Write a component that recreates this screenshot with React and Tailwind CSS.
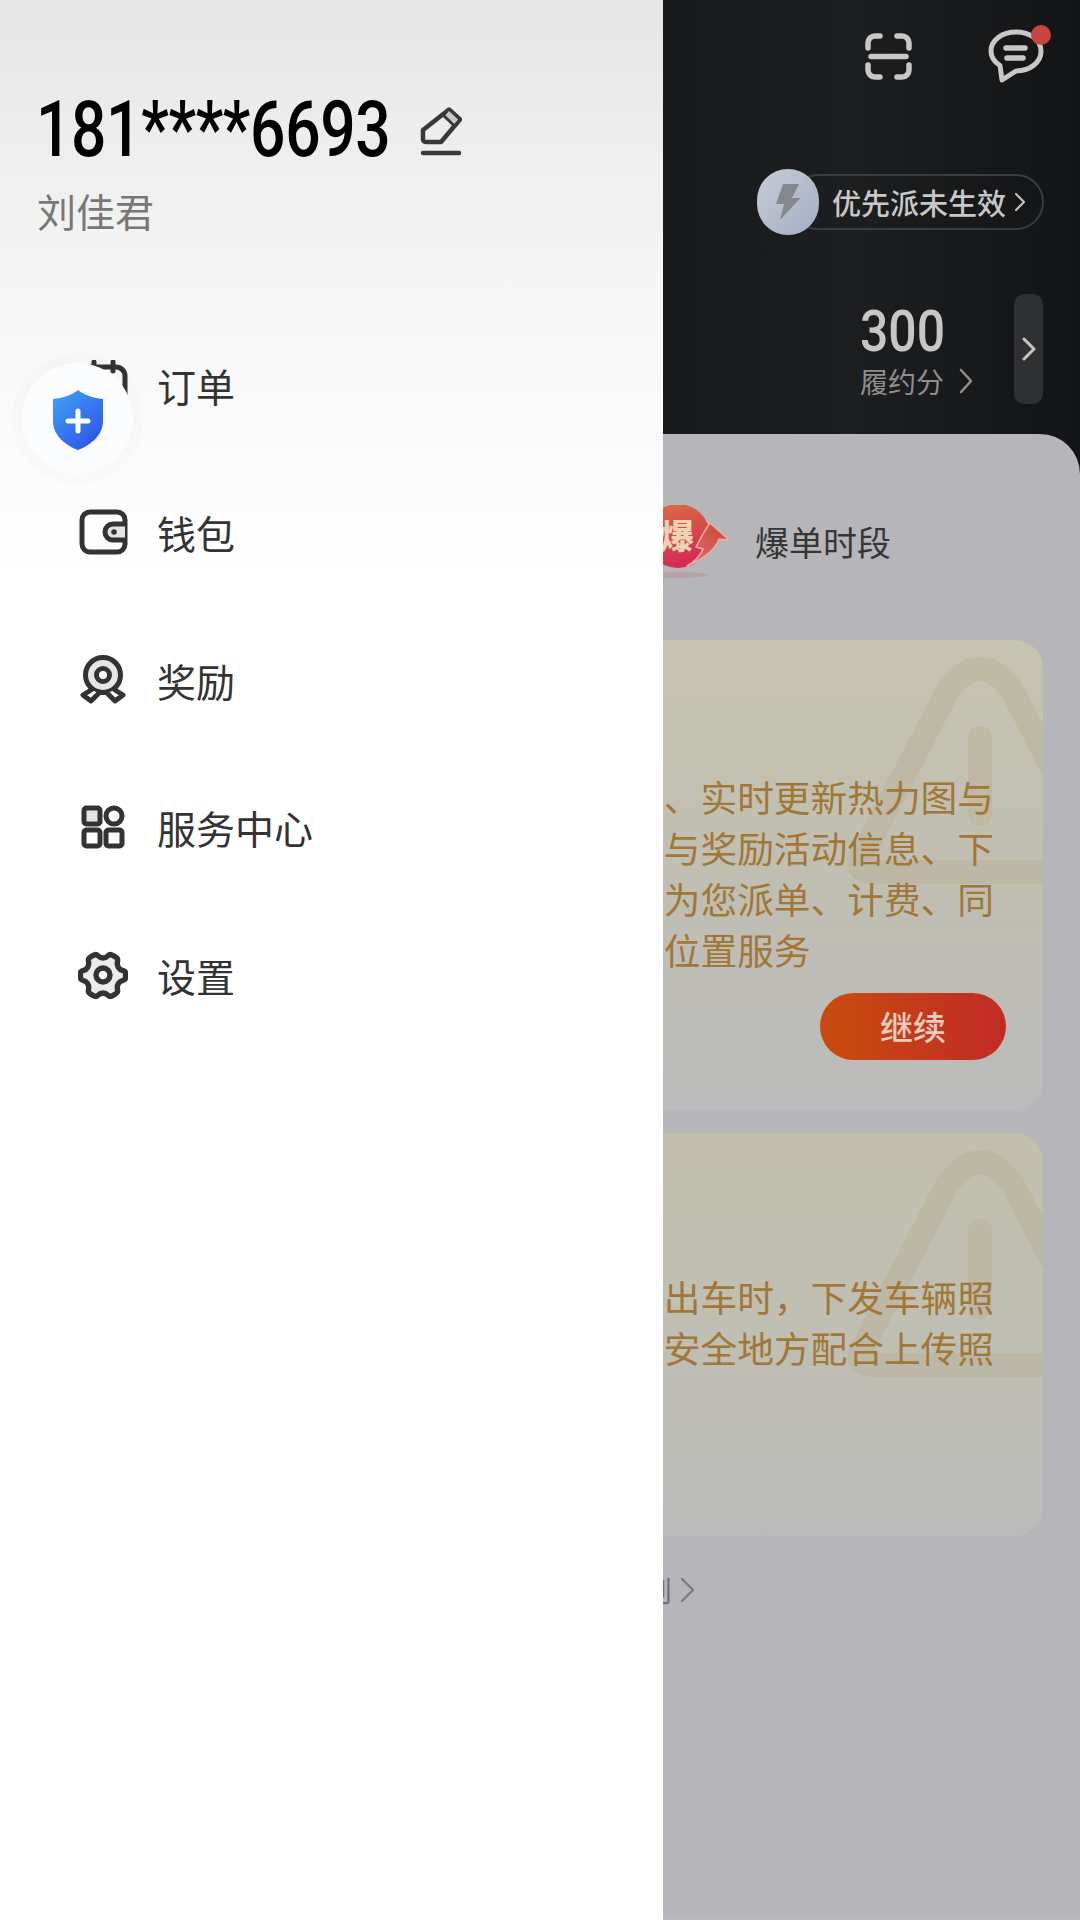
const CJK = "font-['Noto_Sans_CJK_SC','Noto_Sans',sans-serif]";

function OrderIcon() {
  return (
    <svg width="50" height="50" viewBox="0 0 50 50" fill="none" stroke="#333" strokeWidth="5" strokeLinecap="round" strokeLinejoin="round">
      <rect x="3" y="7" width="44" height="40" rx="9" />
      <path d="M16 2v9M35 2v9" />
    </svg>
  );
}
function WalletIcon() {
  return (
    <svg width="50" height="50" viewBox="0 0 50 50" fill="none" stroke="#333" strokeWidth="5" strokeLinejoin="round">
      <rect x="4" y="5" width="43" height="40" rx="8" />
      <path d="M47 17H35a8 8 0 0 0 0 16h12" fill="#e4e4e4" />
      <circle cx="36" cy="25" r="2.800" fill="#333" stroke="none" />
    </svg>
  );
}
function AwardIcon() {
  return (
    <svg width="50" height="50" viewBox="0 0 50 50" fill="none" stroke="#333" strokeWidth="5" strokeLinejoin="round" strokeLinecap="round">
      <circle cx="25" cy="20" r="17.500" fill="#e6e6e6" />
      <circle cx="25" cy="20" r="6.500" fill="#fff" />
      <path d="M13 35l-8 5 8 6 8-8M37 35l8 5-8 6-8-8" fill="#fff" />
    </svg>
  );
}
function GridIcon() {
  return (
    <svg width="50" height="50" viewBox="0 0 50 50" fill="none" stroke="#333" strokeWidth="5" strokeLinejoin="round">
      <rect x="6" y="6" width="16" height="16" rx="2.500" fill="#e4e4e4" />
      <circle cx="36" cy="14" r="8" />
      <rect x="6" y="28" width="16" height="16" rx="2.500" />
      <rect x="28" y="28" width="16" height="16" rx="2.500" />
    </svg>
  );
}
function GearIcon() {
  return (
    <svg width="50" height="50" viewBox="0 0 50 50" fill="none" stroke="#333" strokeWidth="5.400" strokeLinejoin="round">
      <path d="M18 4.500c1.800 0 2.400 3.500 7 3.500s5.200-3.500 7-3.500c1.500 0 6.800 3 7.500 4.500.8 1.800-1.500 4.300.8 8.300s5.500 2.800 6.700 4.300c.8 1.200.8 6.600 0 7.800-1.200 1.500-4.400.3-6.700 4.300s0 6.500-.8 8.300c-.7 1.500-6 4.500-7.500 4.500-1.800 0-2.400-3.500-7-3.500s-5.200 3.500-7 3.500c-1.500 0-6.800-3-7.500-4.500-.8-1.800 1.500-4.300-.8-8.300s-5.500-2.800-6.700-4.300c-.8-1.200-.8-6.600 0-7.800 1.200-1.500 4.400-.3 6.700-4.300s0-6.500.8-8.300C11.200 7.500 16.500 4.500 18 4.500z" fill="#ececec" />
      <circle cx="25" cy="25" r="7" fill="#fff" />
    </svg>
  );
}

const MENU = [
  ["订单", OrderIcon],
  ["钱包", WalletIcon],
  ["奖励", AwardIcon],
  ["服务中心", GridIcon],
  ["设置", GearIcon],
];

function Watermark() {
  return (
    <svg className="absolute left-0 top-0" width="380" height="300" viewBox="0 0 380 300" fill="none">
      <path d="M212 232Q188 232 201 212L284 52Q317 6 350 52L433 212Q446 232 422 232Z" stroke="#b5a98c" strokeOpacity="0.34" strokeWidth="24" strokeLinejoin="round" />
      <rect x="305" y="86" width="24" height="100" rx="12" fill="#b5a98c" fillOpacity="0.34" />
    </svg>
  );
}

export default function App() {
  return (
    <div className={`relative flex h-[1920px] w-[1080px] overflow-hidden bg-[#b5b5ba] ${CJK}`}>
      {/* drawer */}
      <aside className="flex h-full w-[663px] shrink-0 flex-col bg-[linear-gradient(180deg,#e6e6e6_0px,#f6f6f6_300px,#ffffff_580px)]">
        <div className="flex h-[260px] flex-col pl-[37px] pt-[88px]">
          <div className="flex h-[84px] items-center">
            <span className="-ml-px w-[352px] origin-left scale-x-[0.81] whitespace-nowrap font-['Roboto',sans-serif] text-[77px] font-medium leading-none tracking-[-0.5px] text-black">
              181****6693
            </span>
            <svg className="ml-[32px] mt-[2px]" width="42" height="50" viewBox="0 0 42 50" fill="none" stroke="#383838" strokeWidth="4.500" strokeLinejoin="round" strokeLinecap="round">
              <path d="M29 3.500 40 13.500 21 36H5.500a2.500 2.500 0 0 1-2.500-2.500V24z" />
              <path d="M29 5 38 13.500 33.500 19 24.500 10.500z" fill="#c9c9c9" stroke="none" />
              <path d="M23.500 9.500 34 19.500" strokeWidth="3" />
              <path d="M3 47H39" />
            </svg>
          </div>
          <div className="mt-[12px] text-[39px] leading-[52px] text-[#777777]">刘佳君</div>
        </div>
        <nav className="mt-[51px] flex flex-col">
          {MENU.map(([label, Icon]) => (
            <div key={label} className="flex h-[147.500px] items-center pl-[78px]">
              <Icon />
              <span className="ml-[29px] text-[39px] text-[#333333]">{label}</span>
            </div>
          ))}
        </nav>
      </aside>

      {/* floating shield button */}
      <div className="absolute left-[12px] top-[353px] flex h-[131px] w-[131px] items-center justify-center rounded-full bg-black/[0.012]">
        <div className="flex h-[111px] w-[111px] items-center justify-center rounded-full bg-[#fbfcfd]">
          <svg width="50" height="60" viewBox="0 0 50 60" className="mt-[3px]">
            <defs>
              <linearGradient id="sh" x1="0.1" y1="0" x2="0.9" y2="1">
                <stop offset="0" stopColor="#40a0f6" />
                <stop offset="1" stopColor="#2d4fe8" />
              </linearGradient>
            </defs>
            <path d="M25 0C31 5 40 8 50 9V31C50 45 38 55 25 60C12 55 0 45 0 31V9C10 8 19 5 25 0Z" fill="url(#sh)" />
            <path d="M25 21V41M15 31H35" stroke="#fff" strokeWidth="5" strokeLinecap="round" />
          </svg>
        </div>
      </div>

      {/* page behind the drawer */}
      <main className="flex h-full min-w-0 flex-1 flex-col overflow-hidden bg-[linear-gradient(90deg,#17191b_0%,#1c1e20_45%,#121416_100%)]">
        <header className="flex h-[434px] shrink-0 flex-col pr-[37px] pt-[30px]">
          <div className="flex h-[52px] justify-end gap-[77px]">
            <svg className="mt-[3px]" width="47" height="47" viewBox="0 0 47 47" fill="none" stroke="#c8c8c8" strokeWidth="5.500" strokeLinecap="round">
              <path d="M15 3H10a7 7 0 0 0-7 7v5M32 3h5a7 7 0 0 1 7 7v5M15 44H10a7 7 0 0 1-7-7v-5M32 44h5a7 7 0 0 0 7-7v-5M6 23.500H41" />
            </svg>
            <svg className="overflow-visible" width="54" height="52" viewBox="0 0 54 52" fill="none" stroke="#c8c8c8" strokeWidth="5" strokeLinecap="round" strokeLinejoin="round">
              <path d="M27 2C13 2 2 10 2 21c0 6 3.500 11 9 14.500L13 50l14-9c14 0 25-8.500 25-20S41 2 27 2Z" />
              <path d="M17 18H36M18 28H34" strokeWidth="5.500" />
              <circle cx="52" cy="5" r="10" fill="#c9453f" stroke="none" />
            </svg>
          </div>
          <div className="mt-[87px] flex h-[66px] items-center justify-end">
            <div className="relative -mr-px flex h-[56px] w-[254px] items-center rounded-full border-2 border-[#3b3d3f] pl-[40px]">
              <div className="absolute left-[-35px] top-[-7px] flex h-[66px] w-[62px] items-center justify-center rounded-full bg-[linear-gradient(135deg,#c8ccd5,#a2adc4)]">
                <svg width="26" height="38" viewBox="0 0 26 38">
                  <path d="M8 1H24L17 15H25.500L5 37 9 21H1Z" fill="#84878e" />
                </svg>
              </div>
              <span className="whitespace-nowrap text-[29px] font-medium leading-none text-[#c8c8c8]">优先派未生效</span>
              <svg className="ml-[9px]" width="10" height="20" viewBox="0 0 10 20" fill="none" stroke="#c0c0c0" strokeWidth="2.200" strokeLinecap="round" strokeLinejoin="round">
                <path d="M1 2l8 8-8 8" />
              </svg>
            </div>
          </div>
          <div className="mt-[59px] flex h-[110px] justify-end gap-[41px]">
            <div className="flex w-[113px] flex-col">
              <span className="mt-[14px] h-[46px] w-[82px] origin-left scale-x-[0.86] whitespace-nowrap font-['Roboto',sans-serif] text-[58px] font-medium leading-[46px] text-[#c6c6c6]">300</span>
              <div className="mt-[9px] flex items-center justify-between">
                <span className="text-[28px] leading-[36px] text-[#8e8e8e]">履约分</span>
                <svg width="14" height="26" viewBox="0 0 14 26" fill="none" stroke="#8e8e8e" strokeWidth="2.600" strokeLinecap="round" strokeLinejoin="round">
                  <path d="M2 2l10 11L2 24" />
                </svg>
              </div>
            </div>
            <div className="flex w-[29px] items-center justify-center rounded-[10px] bg-[#2e3032]">
              <svg width="14" height="24" viewBox="0 0 14 24" fill="none" stroke="#c4c4c4" strokeWidth="3" strokeLinecap="round" strokeLinejoin="round">
                <path d="M2 2l10 10L2 22" />
              </svg>
            </div>
          </div>
        </header>

        <section className="flex min-h-0 flex-1 flex-col rounded-tr-[40px] bg-[#b5b5ba] pr-[37px]">
          <div className="flex h-[206px] shrink-0 items-center pt-[10px]">
            <svg width="67" height="74" viewBox="0 0 67 74" className="shrink-0">
              <defs>
                <linearGradient id="boom" x1="0" y1="0" x2="0.3" y2="1">
                  <stop offset="0" stopColor="#d9703f" />
                  <stop offset="1" stopColor="#d42c55" />
                </linearGradient>
                <linearGradient id="arrow" x1="0" y1="1" x2="1" y2="0">
                  <stop offset="0" stopColor="#e0707a" />
                  <stop offset="1" stopColor="#c8452f" />
                </linearGradient>
              </defs>
              <ellipse cx="15" cy="70" rx="30" ry="3" fill="#b8979d" fillOpacity="0.6" />
              <circle cx="15" cy="31" r="32" fill="url(#boom)" />
              <path d="M24 61Q36 54 40 44L33 42Q40 28 47 18L66 35 56 34Q50 50 24 61Z" fill="url(#arrow)" stroke="#e8b0a4" strokeWidth="1.500" strokeLinejoin="round" />
              <text x="-3" y="44" fontSize="34" fontWeight="900" fill="#edd2b4" fontFamily="Noto Sans CJK SC">爆</text>
            </svg>
            <span className="ml-[25px] text-[34px] leading-none text-[#363636]">爆单时段</span>
          </div>

          <div className="relative flex h-[470px] shrink-0 flex-col items-end overflow-hidden rounded-r-[28px] bg-[linear-gradient(180deg,#c6c3af_0%,#c1bfb1_45%,#bbbbbb_100%)] pr-[37px] pt-[131px]">
            <Watermark />
            <div className="relative mr-[12px] whitespace-nowrap text-right text-[36.700px] leading-[51px] text-[#a07737]">
              <div>、实时更新热力图与</div>
              <div>与奖励活动信息、下</div>
              <div>为您派单、计费、同</div>
              <div className="w-[330px] text-left">位置服务</div>
            </div>
            <div className="relative mt-[18px] flex h-[67px] w-[186px] items-center justify-center rounded-full bg-[linear-gradient(90deg,#c84c0e,#c22a26)] text-[33px] font-medium leading-none text-[#ecccbd]">
              继续
            </div>
          </div>

          <div className="relative mt-[23px] h-[403px] shrink-0 overflow-hidden rounded-r-[28px] bg-[linear-gradient(180deg,#c2bfab_0%,#c0bfb2_45%,#bbbbbb_100%)] pt-[138px]">
            <Watermark />
            <div className="relative mr-[49px] flex flex-col items-end whitespace-nowrap text-[36.700px] leading-[51px] text-[#a07737]">
              <div>出车时，下发车辆照</div>
              <div>安全地方配合上传照</div>
            </div>
          </div>

          <div className="ml-[-19px] mt-[38px] flex h-[32px] shrink-0 items-center">
            <span className="text-[28px] leading-none text-[#6e6e73]">则</span>
            <svg className="ml-[8px]" width="15" height="26" viewBox="0 0 15 26" fill="none" stroke="#7c7c80" strokeWidth="2.400" strokeLinecap="round" strokeLinejoin="round">
              <path d="M2 2l11 11L2 24" />
            </svg>
          </div>

          <div className="mr-[-37px] mt-auto h-[6px] shrink-0 bg-[#b9b9bd]" />
        </section>
      </main>
    </div>
  );
}
